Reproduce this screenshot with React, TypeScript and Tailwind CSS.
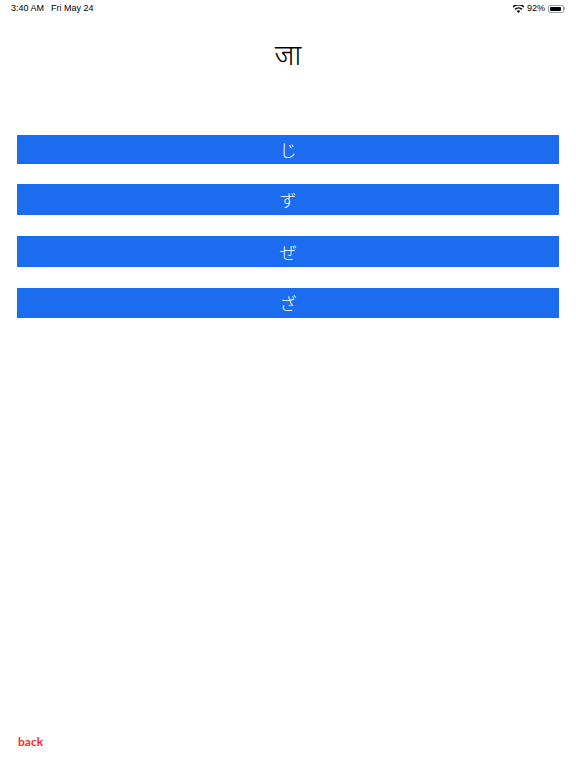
const OPTIONS = [
  { kana: "じ", cls: "h-[29px]" },
  { kana: "ず", cls: "mt-[20px] h-[31px]" },
  { kana: "ぜ", cls: "mt-[21px] h-[31px]" },
  { kana: "ざ", cls: "mt-[21px] h-[30px]" },
];

function StatusBar() {
  return (
    <div className="flex h-[17px] items-center justify-between px-[11px] text-[9px] text-black [font-family:'Liberation_Sans',sans-serif]">
      <div className="flex gap-[7px]">
        <span>3:40 AM</span>
        <span>Fri May 24</span>
      </div>
      <div className="flex items-center gap-[3px]">
        <svg width="11" height="8" viewBox="0 0 22 16" fill="black">
          <path d="M11 16 L7.5 12.2 A5 5 0 0 1 14.5 12.2 Z" />
          <path d="M5.2 9.8 L3 7.5 A11.5 11.5 0 0 1 19 7.5 L16.8 9.8 A8.3 8.3 0 0 0 5.2 9.8 Z" />
          <path d="M0.8 5.2 L-1.2 3 A17.5 17.5 0 0 1 23.2 3 L21.2 5.2 A14.6 14.6 0 0 0 0.8 5.2 Z" />
        </svg>
        <span>92%</span>
        <div className="flex items-center">
          <div className="h-[8px] w-[16px] rounded-[2px] border border-gray-400 p-[1px]">
            <div className="h-full w-[90%] rounded-[1px] bg-black" />
          </div>
          <div className="h-[3px] w-[1px] rounded-r bg-gray-400" />
        </div>
      </div>
    </div>
  );
}

export default function App() {
  return (
    <div className="flex h-[768px] w-[576px] flex-col bg-white">
      <StatusBar />
      <div className="mt-[23px] flex justify-center text-[28px] font-light leading-[36px] text-black [font-family:'Noto_Sans_Devanagari','Noto_Sans',sans-serif]">
        जा
      </div>
      <div className="mt-[59px] flex flex-col px-[17px]">
        {OPTIONS.map((o, i) => (
          <button
            key={i}
            className={`flex w-full items-center justify-center bg-[#1b6cef] text-[17px] font-light text-white [font-family:'Noto_Sans_CJK_JP',sans-serif] ${o.cls}`}
          >
            {o.kana}
          </button>
        ))}
      </div>
      <div className="flex-1" />
      <div className="mb-[16px] px-[18px]">
        <button className="text-[12px] font-bold text-[#ff2a1f] [font-family:Lato,sans-serif]">
          back
        </button>
      </div>
    </div>
  );
}
